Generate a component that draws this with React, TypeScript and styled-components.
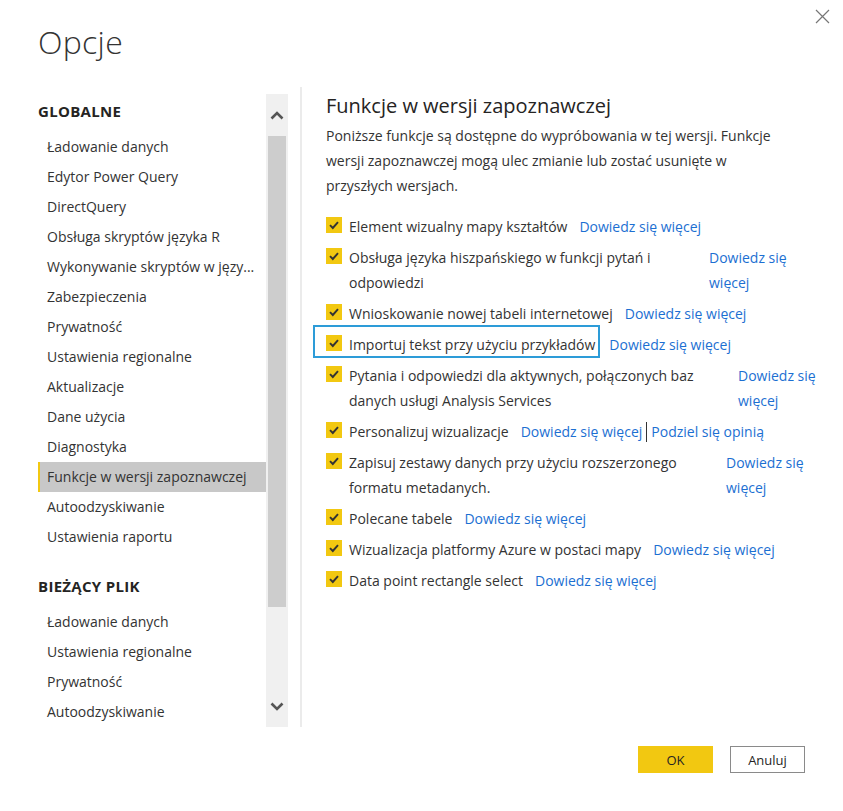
import React from 'react'
import styled, { createGlobalStyle } from 'styled-components'

const GlobalStyle = createGlobalStyle`
  html, body {
    margin: 0;
    padding: 0;
    background: #ffffff;
  }
  body {
    font-family: 'Segoe UI', 'Open Sans', 'Noto Sans', sans-serif;
    color: #333333;
  }
`

const globalItems = [
  'Ładowanie danych',
  'Edytor Power Query',
  'DirectQuery',
  'Obsługa skryptów języka R',
  'Wykonywanie skryptów w języ...',
  'Zabezpieczenia',
  'Prywatność',
  'Ustawienia regionalne',
  'Aktualizacje',
  'Dane użycia',
  'Diagnostyka',
  'Funkcje w wersji zapoznawczej',
  'Autoodzyskiwanie',
  'Ustawienia raportu'
]

const fileItems = ['Ładowanie danych', 'Ustawienia regionalne', 'Prywatność', 'Autoodzyskiwanie']

interface Feature {
  label: string
  textWidth?: number
  gap?: number
  highlighted?: boolean
  feedback?: boolean
}

const features: Feature[] = [
  { label: 'Element wizualny mapy kształtów' },
  { label: 'Obsługa języka hiszpańskiego w funkcji pytań i odpowiedzi', textWidth: 345, gap: 15 },
  { label: 'Wnioskowanie nowej tabeli internetowej' },
  { label: 'Importuj tekst przy użyciu przykładów', highlighted: true, gap: 14 },
  { label: 'Pytania i odpowiedzi dla aktywnych, połączonych baz danych usługi Analysis Services', textWidth: 380, gap: 9 },
  { label: 'Personalizuj wizualizacje', feedback: true },
  { label: 'Zapisuj zestawy danych przy użyciu rozszerzonego formatu metadanych.', textWidth: 362, gap: 15 },
  { label: 'Polecane tabele' },
  { label: 'Wizualizacja platformy Azure w postaci mapy' },
  { label: 'Data point rectangle select' }
]

const Check = () => (
  <svg width='16' height='16' viewBox='0 0 16 16'>
    <rect width='16' height='16' fill='#f2c811' />
    <path d='M4 8.2 L6.8 11 L12 5.2' fill='none' stroke='#333' strokeWidth='1.9' />
  </svg>
)

const Chevron = ({ up }: { up?: boolean }) => (
  <svg width='14' height='9' viewBox='0 0 14 9'>
    <path d={up ? 'M1.5 7.5 L7 2 L12.5 7.5' : 'M1.5 1.5 L7 7 L12.5 1.5'} fill='none' stroke='#555' strokeWidth='2.6' />
  </svg>
)

const App = () => {
  return (
    <>
      <GlobalStyle />
      <Dialog>
        <Header>
          <Title>Opcje</Title>
          <CloseButton aria-label='Zamknij'>
            <svg width='15' height='15' viewBox='0 0 15 15'>
              <path d='M1 1 L14 14 M14 1 L1 14' stroke='#777' strokeWidth='1.2' />
            </svg>
          </CloseButton>
        </Header>

        <Body>
          <Sidebar>
            <NavList>
              <SectionTitle>Globalne</SectionTitle>
              {globalItems.map((it) => (
                <NavItem key={it} selected={it === 'Funkcje w wersji zapoznawczej'}>
                  {it}
                </NavItem>
              ))}
              <SectionTitle spaced>Bieżący plik</SectionTitle>
              {fileItems.map((it) => (
                <NavItem key={'f' + it}>{it}</NavItem>
              ))}
            </NavList>
            <ScrollTrack>
              <ArrowBox>
                <Chevron up />
              </ArrowBox>
              <Thumb />
              <TrackRest />
              <ArrowBox>
                <Chevron />
              </ArrowBox>
            </ScrollTrack>
          </Sidebar>

          <Divider />

          <Content>
            <Heading>Funkcje w wersji zapoznawczej</Heading>
            <Description>
              Poniższe funkcje są dostępne do wypróbowania w tej wersji. Funkcje wersji zapoznawczej mogą ulec zmianie
              lub zostać usunięte w przyszłych wersjach.
            </Description>
            <FeatureList>
              {features.map((f) => (
                <FeatureRow key={f.label} gap={f.gap ?? 12}>
                  <FeatureLabel highlighted={f.highlighted}>
                    <CheckWrap>
                      <Check />
                    </CheckWrap>
                    <FeatureText style={f.textWidth ? { width: f.textWidth } : undefined}>{f.label}</FeatureText>
                  </FeatureLabel>
                  <Links>
                    <Link>Dowiedz się więcej</Link>
                    {f.feedback && (
                      <>
                        <Bar />
                        <Link>Podziel się opinią</Link>
                      </>
                    )}
                  </Links>
                </FeatureRow>
              ))}
            </FeatureList>
          </Content>
        </Body>

        <Footer>
          <PrimaryButton>OK</PrimaryButton>
          <SecondaryButton>Anuluj</SecondaryButton>
        </Footer>
      </Dialog>
    </>
  )
}

export default App

const Dialog = styled.div`
  width: 843px;
  height: 811px;
  display: flex;
  flex-direction: column;
  box-sizing: border-box;
`

const Header = styled.div`
  display: flex;
  justify-content: space-between;
  align-items: flex-start;
  height: 87px;
  padding: 0 12px 0 38px;
`

const Title = styled.h1`
  margin: 22px 0 0;
  font-size: 32px;
  line-height: 40px;
  font-weight: 300;
  color: #333;
  letter-spacing: 0.3px;
`

const CloseButton = styled.button`
  margin-top: 9px;
  border: none;
  background: transparent;
  padding: 0;
  width: 16px;
  height: 16px;
  display: flex;
`

const Body = styled.div`
  display: flex;
  height: 640px;
`

const Sidebar = styled.div`
  display: flex;
  margin: 7px 0 0 38px;
  height: 633px;
  overflow: hidden;
`

const NavList = styled.div`
  width: 228px;
  display: flex;
  flex-direction: column;
`

const SectionTitle = styled.div<{ spaced?: boolean }>`
  text-transform: uppercase;
  font-weight: 700;
  font-size: 15px;
  line-height: 24px;
  letter-spacing: 0.3px;
  color: #252423;
  margin: ${(p) => (p.spaced ? '22px' : '5px')} 0 9px;
`

const NavItem = styled.div<{ selected?: boolean }>`
  flex: none;
  height: 30px;
  line-height: 30px;
  font-size: 14px;
  padding-left: 9px;
  color: #333;
  white-space: nowrap;
  background: ${(p) => (p.selected ? '#c8c8c8' : 'transparent')};
  box-shadow: ${(p) => (p.selected ? 'inset 2px 0 0 #f2c811' : 'none')};
`

const ScrollTrack = styled.div`
  width: 22px;
  background: #f0f0f0;
  display: flex;
  flex-direction: column;
  align-items: center;
`

const ArrowBox = styled.div`
  height: 42px;
  width: 100%;
  display: flex;
  align-items: center;
  justify-content: center;
`

const Thumb = styled.div`
  width: 18px;
  height: 471px;
  background: #cdcdcd;
`

const TrackRest = styled.div`
  flex: 1;
`

const Divider = styled.div`
  width: 2px;
  background: #ebebeb;
  margin-left: 12px;
  height: 640px;
`

const Content = styled.div`
  flex: 1;
  padding: 5px 20px 0 24px;
`

const Heading = styled.h2`
  margin: 0;
  font-size: 20px;
  line-height: 28px;
  font-weight: 400;
  color: #252423;
`

const Description = styled.p`
  margin: 3px 0 16px;
  max-width: 458px;
  font-size: 14px;
  line-height: 25px;
  color: #333;
`

const FeatureList = styled.div`
  display: flex;
  flex-direction: column;
  gap: 6px;
`

const FeatureRow = styled.div<{ gap: number }>`
  display: flex;
  align-items: flex-start;
  gap: ${(p) => p.gap}px;
`

const FeatureLabel = styled.div<{ highlighted?: boolean }>`
  position: relative;
  display: flex;
  align-items: flex-start;
  gap: 7px;
  &::before {
    content: '';
    display: ${(p) => (p.highlighted ? 'block' : 'none')};
    position: absolute;
    left: -13px;
    right: -5px;
    top: -7px;
    bottom: -1px;
    border: 2px solid #2d9cd8;
  }
`

const CheckWrap = styled.div`
  height: 25px;
  display: flex;
  align-items: center;
  flex: none;
  margin-top: -2px;
`

const FeatureText = styled.div`
  font-size: 14px;
  line-height: 25px;
  color: #333;
`

const Links = styled.div`
  display: flex;
  align-items: flex-start;
`

const Link = styled.a`
  font-size: 14px;
  line-height: 25px;
  color: #1c6fd2;
  cursor: pointer;
`

const Bar = styled.span`
  width: 1px;
  height: 20px;
  margin: 3px 4px 0;
  background: #333;
`

const Footer = styled.div`
  display: flex;
  justify-content: flex-end;
  gap: 17px;
  padding: 19px 38px 0 0;
`

const PrimaryButton = styled.button`
  width: 75px;
  height: 27px;
  border: none;
  background: #f2c811;
  font-family: inherit;
  font-size: 13px;
  color: #252423;
`

const SecondaryButton = styled.button`
  width: 75px;
  height: 27px;
  border: 1px solid #8a8a8a;
  background: #ffffff;
  font-family: inherit;
  font-size: 13px;
  color: #252423;
`
